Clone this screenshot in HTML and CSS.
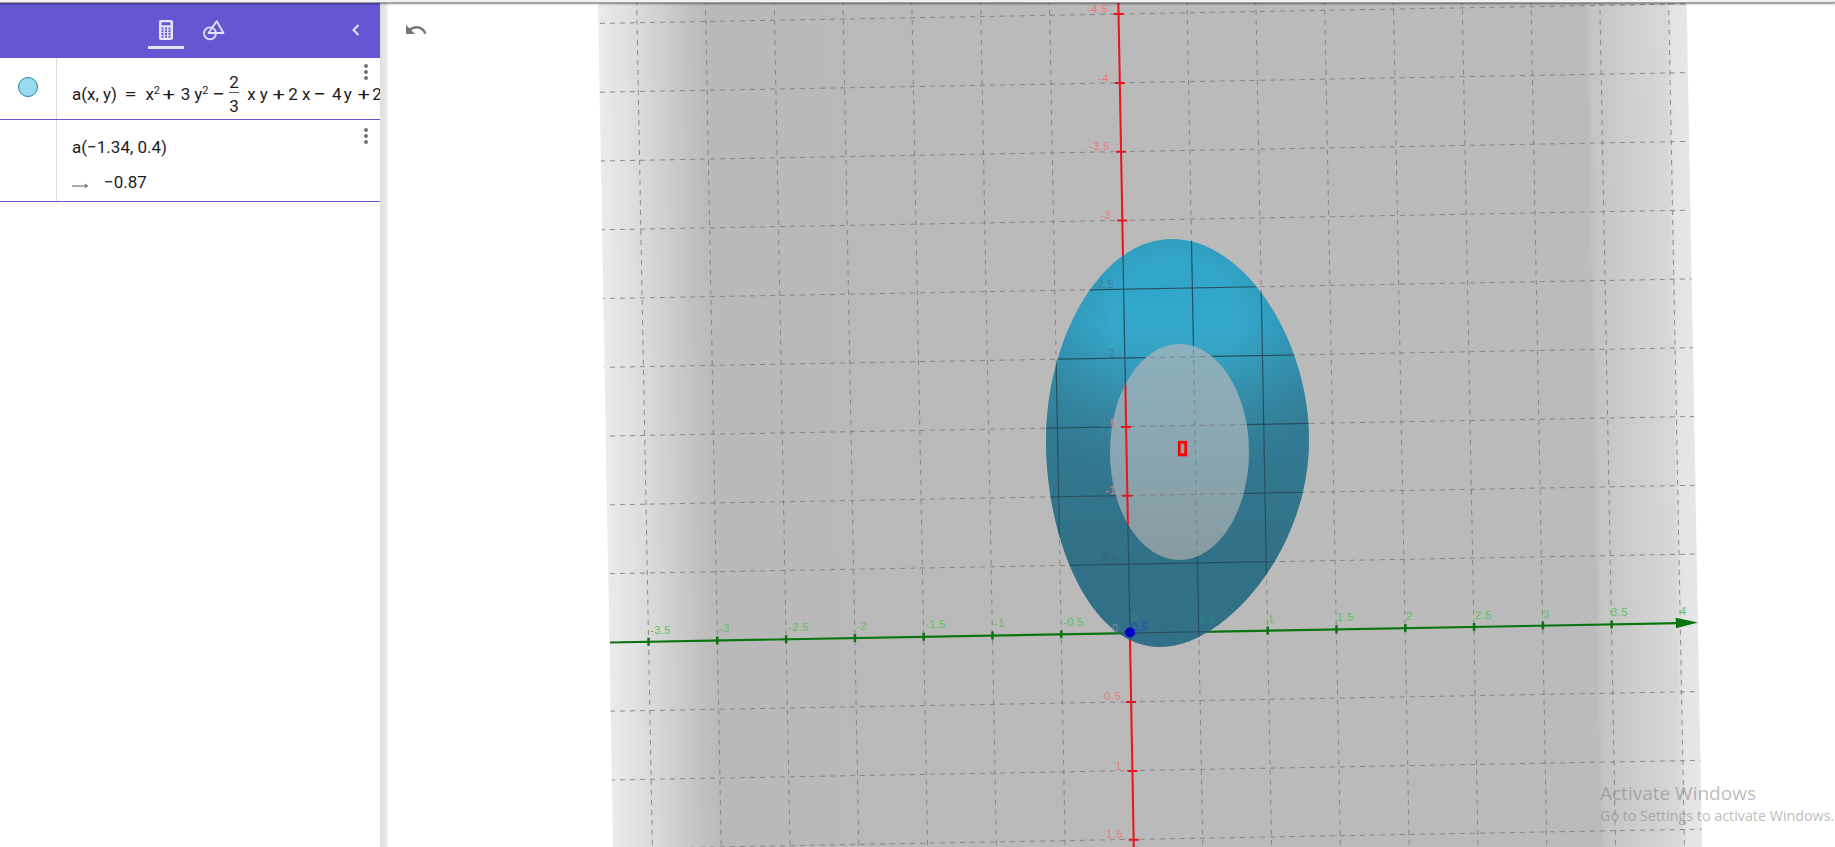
FILE: index.html
```html
<!DOCTYPE html>
<html lang="en">
<head>
<meta charset="utf-8">
<title>GeoGebra 3D Calculator</title>
<link rel="stylesheet" href="styles.css">
</head>
<body>
<div class="app">
  <div class="top-strip"></div>
  <div class="main">
    <aside class="algebra">
      <header class="header">
        <div class="tabs">
          <div class="tab tab-active">
            <svg class="tab-icon" viewBox="0 0 14 20"><path class="icon-fill" fill-rule="evenodd" d="M2 0h10a2 2 0 0 1 2 2v16a2 2 0 0 1-2 2H2a2 2 0 0 1-2-2V2a2 2 0 0 1 2-2zM2.500 2.300v3h9v-3zM2.500 7.400v2h2v-2zM6 7.400v2h2v-2zM9.500 7.400v2h2v-2zM2.500 10.200v2h2v-2zM6 10.200v2h2v-2zM9.500 10.200v2h2v-2zM2.500 13v2h2v-2zM6 13v2h2v-2zM9.500 13v2h2v-2zM2.500 15.800v2h2v-2zM6 15.800v2h2v-2zM9.500 15.800v2h2v-2z"/></svg>
          </div>
          <div class="tab">
            <svg class="tab-icon-geo" viewBox="0 0 22 22"><circle class="icon-line" cx="7" cy="14.300" r="6"/><path class="icon-line" d="M13.700 2.300 20.500 14H5.500Z"/></svg>
          </div>
        </div>
        <svg class="chevron" viewBox="0 0 12 16"><path class="chevron-line" d="M8.500 3 3.500 8l5 5"/></svg>
      </header>
      <div class="row row-one">
        <div class="marble-cell"><span class="marble"></span></div>
        <div class="cell">
          <div class="formula">
            <span>a(x, y)</span><span class="op ml9">=</span><span class="ml10">x<sup>2</sup></span><span class="op ml4">+</span><span class="ml7">3</span><span class="ml4">y<sup>2</sup></span><span class="op ml6">−</span>
            <span class="frac ml5"><span class="num">2</span><span class="bar"></span><span class="den">3</span></span>
            <span class="ml8">x</span><span class="ml4">y</span><span class="op ml6">+</span><span class="ml5">2</span><span class="ml4">x</span><span class="op ml5">−</span><span class="ml7">4</span><span class="ml2">y</span><span class="op ml7">+</span><span class="ml4">2</span>
          </div>
          <span class="dots"><i></i><i></i><i></i></span>
        </div>
      </div>
      <div class="row row-two">
        <div class="marble-cell"></div>
        <div class="cell">
          <div class="line-input">a(−1.34, 0.4)</div>
          <div class="line-output">
            <svg class="out-arrow" viewBox="0 0 16 6"><path class="out-arrow-line" d="M0 3h15M12.500 1.200 15.500 3l-3 1.800"/></svg>
            <span>−0.87</span>
          </div>
          <span class="dots"><i></i><i></i><i></i></span>
        </div>
      </div>
    </aside>
    <div class="splitter"></div>
    <section class="graphics">
      <svg class="undo" viewBox="0 0 24 24"><path class="undo-path" d="M12.500 8c-2.650 0-5.050.99-6.900 2.600L2 7v9h9l-3.620-3.620c1.390-1.160 3.160-1.880 5.120-1.880 3.540 0 6.550 2.310 7.600 5.500l2.370-.78C21.080 11.030 17.150 8 12.500 8z"/></svg>
      <svg class="scene" viewBox="388 3 1447 844">
        <defs>
          <linearGradient id="plane" gradientUnits="userSpaceOnUse" x1="598" y1="0" x2="1698" y2="-19">
            <stop offset="0" stop-color="#ebebeb"/>
            <stop offset="0.025" stop-color="#e0e0e0"/>
            <stop offset="0.056" stop-color="#d0d0d0"/>
            <stop offset="0.084" stop-color="#c0c0c0"/>
            <stop offset="0.102" stop-color="#b9b9b9"/>
            <stop offset="0.897" stop-color="#bbbbbb"/>
            <stop offset="0.902" stop-color="#c4c4c4"/>
            <stop offset="0.97" stop-color="#d8d8d8"/>
            <stop offset="0.976" stop-color="#e4e4e4"/>
            <stop offset="1" stop-color="#e8e8e8"/>
          </linearGradient>
          <linearGradient id="eggfill" gradientUnits="userSpaceOnUse" x1="1170" y1="239" x2="1165" y2="647">
            <stop offset="0" stop-color="#30a4c8"/>
            <stop offset="0.22" stop-color="#34a8cc"/>
            <stop offset="0.45" stop-color="#388ea9"/>
            <stop offset="0.7" stop-color="#367a91"/>
            <stop offset="1" stop-color="#35748a"/>
          </linearGradient>
          <radialGradient id="eggshade" gradientUnits="userSpaceOnUse" cx="1175" cy="320" r="170">
            <stop offset="0" stop-color="#2d6c82" stop-opacity="0"/>
            <stop offset="0.35" stop-color="#2d6c82" stop-opacity="0"/>
            <stop offset="1" stop-color="#2d6c82" stop-opacity=".55"/>
          </radialGradient>
          <linearGradient id="holefill" gradientUnits="userSpaceOnUse" x1="1175" y1="345" x2="1175" y2="560">
            <stop offset="0" stop-color="#8cb0bd"/>
            <stop offset="0.5" stop-color="#8aa6b0"/>
            <stop offset="1" stop-color="#869ba1"/>
          </linearGradient>
          <clipPath id="planeclip"><path d="M598 0H1686.600L1702 847H613Z"/></clipPath>
          <clipPath id="eggclip"><path d="M1172 239C1245 239 1309 340 1309 440C1309 550 1225 647 1160 647C1090 647 1046 540 1046 440C1046 340 1100 239 1172 239Z"/></clipPath>
          <clipPath id="holeclip"><ellipse cx="1179.500" cy="452" rx="69.500" ry="108"/></clipPath>
          <g id="vlines">
            <path d="M636.600 0 652.400 847M705.400 0 721.200 847M774.200 0 790 847M843 0 858.800 847M911.800 0 927.600 847M980.600 0 996.400 847M1049.400 0 1065.200 847M1118.200 0 1134 847M1187 0 1202.800 847M1255.800 0 1271.600 847M1324.600 0 1340.400 847M1393.400 0 1409.200 847M1462.200 0 1478 847M1531 0 1546.800 847M1599.800 0 1615.600 847M1668.600 0 1684.400 847"/>
          </g>
          <g id="hlines">
            <path d="M590 23.600 1710 3.400M590 92.400 1710 72.200M590 161.200 1710 141M590 230 1710 209.800M590 298.800 1710 278.600M590 367.600 1710 347.400M590 436.400 1710 416.200M590 505.200 1710 485M590 574 1710 553.800M590 642.800 1710 622.600M590 711.600 1710 691.400M590 780.400 1710 760.200M590 849.200 1710 829"/>
          </g>
          <g id="redaxis">
            <path class="red-line" d="M1118.300 0 1133.800 847"/>
            <path class="red-tick" d="M1113.600 14h10M1114.800 83h10M1116.100 151.700h10M1117.300 220.500h10M1118.600 289.300h10M1119.900 358h10M1121.100 427h10M1122.400 495.700h10M1123.600 564.500h10M1126.100 702h10M1127.400 771h10M1128.700 839.700h10"/>
          </g>
        </defs>

        <path class="plane" d="M598 0H1686.600L1702 847H613Z"/>
        <g clip-path="url(#planeclip)">
          <use href="#vlines" class="grid-dash"/>
          <use href="#hlines" class="grid-dash"/>
        </g>

        <text class="lbl-green" x="650" y="634">-3.5</text>
        <text class="lbl-green" x="719" y="632">-3</text>
        <text class="lbl-green" x="788" y="631">-2.5</text>
        <text class="lbl-green" x="856" y="630">-2</text>
        <text class="lbl-green" x="925" y="628">-1.5</text>
        <text class="lbl-green" x="994" y="627">-1</text>
        <text class="lbl-green" x="1063" y="626">-0.5</text>
        <text class="lbl-green" x="1268" y="623">1</text>
        <text class="lbl-green" x="1337" y="621">1.5</text>
        <text class="lbl-green" x="1406" y="620">2</text>
        <text class="lbl-green" x="1475" y="619">2.5</text>
        <text class="lbl-green" x="1543" y="618">3</text>
        <text class="lbl-green" x="1611" y="616">3.5</text>
        <text class="lbl-green" x="1680" y="615">4</text>

        <text class="lbl-red lbl-end" x="1108" y="13">-4.5</text>
        <text class="lbl-red lbl-end" x="1109" y="82">-4</text>
        <text class="lbl-red lbl-end" x="1110" y="150">-3.5</text>
        <text class="lbl-red lbl-end" x="1111" y="219">-3</text>
        <text class="lbl-red lbl-end" x="1121" y="700">0.5</text>
        <text class="lbl-red lbl-end" x="1122" y="770">1</text>
        <text class="lbl-red lbl-end" x="1123" y="838">1.5</text>

        <use href="#redaxis"/>
        <path class="green-line" d="M610 642.500 1680 623.200"/>
        <path class="green-tick" d="M648.500 637.700v8M717.300 636.500v8M786.100 635.200v8M854.900 634v8M923.700 632.800v8M992.500 631.500v8M1061.300 630.300v8M1130.100 629v8M1198.900 627.800v8M1267.700 626.600v8M1336.500 625.300v8M1405.300 624.100v8M1474.100 622.900v8M1542.900 621.600v8M1611.700 620.400v8"/>
        <path class="green-head" d="M1675.700 617.700 1698 622.600 1676 628.300Z"/>

        <path class="egg" d="M1172 239C1245 239 1309 340 1309 440C1309 550 1225 647 1160 647C1090 647 1046 540 1046 440C1046 340 1100 239 1172 239Z"/>
        <path class="egg-shade" d="M1172 239C1245 239 1309 340 1309 440C1309 550 1225 647 1160 647C1090 647 1046 540 1046 440C1046 340 1100 239 1172 239Z"/>
        <g clip-path="url(#eggclip)">
          <use href="#vlines" class="grid-solid"/>
          <use href="#hlines" class="grid-solid"/>
        </g>
        <text class="lbl-dim" x="1093" y="288">-2.5</text>
        <text class="lbl-dim" x="1104" y="357">-2</text>
        <text class="lbl-dim" x="1096" y="427">-1.</text>
        <text class="lbl-dim-dark" x="1098" y="563">-0.5</text>
        <text class="lbl-teal" x="1199" y="624">0.5</text>
        <text class="lbl-teal" x="1131" y="621">0</text>

        <ellipse class="hole" cx="1179.500" cy="452" rx="69.500" ry="108"/>
        <g clip-path="url(#holeclip)">
          <use href="#vlines" class="grid-dash"/>
          <use href="#hlines" class="grid-dash"/>
          <use href="#redaxis"/>
        </g>
        <text class="lbl-red" x="1110" y="427">5</text>
        <text class="lbl-red lbl-end" x="1116" y="494">-1</text>

        <text class="lbl-blue" x="1131" y="631">0.5</text>
        <text class="lbl-grey" x="1112" y="632">0</text>
        <circle class="point" cx="1130" cy="632.500" r="5"/>
        <rect class="marker" x="1179.300" y="442.300" width="6.400" height="12.600"/>
      </svg>
    </section>
  </div>
</div>
<div class="watermark">
  <div class="wm-title">Activate Windows</div>
  <div class="wm-sub">Go to Settings to activate Windows.</div>
</div>
</body>
</html>
```
FILE: styles.css
```css
* { box-sizing: border-box; }
html, body { margin: 0; padding: 0; height: 847px; overflow: hidden; background: #fff; }
body { font-family: Roboto, "Liberation Sans", sans-serif; color: #1c1c1f; position: relative; }
.app { display: flex; flex-direction: column; width: 1835px; height: 847px; }
.top-strip { height: 3px; flex: none; background: linear-gradient(#f4f4f4 0, #f0f0f0 50%, #777 100%); position: relative; z-index: 2; box-shadow: 0 1px 2px rgba(0,0,0,.45); }
.main { display: flex; flex: 1; min-height: 0; }

.algebra { width: 380px; flex: none; display: flex; flex-direction: column; background: #fff; }
.header { height: 55px; flex: none; background: #6557d2; position: relative; display: flex; justify-content: center; }
.tabs { display: flex; gap: 12px; }
.tab { width: 36px; height: 46px; display: flex; align-items: center; justify-content: center; padding-top: 11px; border-bottom: 3px solid transparent; }
.tab-active { border-bottom-color: #e6e3f8; }
.tab-icon { width: 14px; height: 20px; display: block; }
.tab-icon-geo { width: 22px; height: 22px; display: block; }
.icon-fill { fill: #e6e3f8; }
.icon-line { fill: none; stroke: #e6e3f8; stroke-width: 1.800; stroke-linejoin: round; }
.chevron { position: absolute; left: 350px; top: 19px; width: 12px; height: 16px; }
.chevron-line { fill: none; stroke: #e6e3f8; stroke-width: 2; }

.row { display: flex; border-bottom: 1px solid #6557d2; flex: none; }
.row-one { height: 62px; }
.row-two { height: 82px; }
.marble-cell { width: 57px; flex: none; border-right: 1px solid #dcdcdc; display: flex; justify-content: center; }
.marble { width: 20px; height: 20px; margin-top: 19px; margin-right: 1px; border-radius: 50%; background: #99dcf0; border: 1px solid #1f86a8; }
.cell { flex: 1; min-width: 0; position: relative; overflow: hidden; padding-left: 15px; font-size: 17px; line-height: 24px; }
.formula { display: flex; align-items: flex-start; white-space: nowrap; padding-top: 24px; }
.formula sup { font-size: 11px; line-height: 0; vertical-align: 6px; }
.op { display: inline-block; transform: scaleX(1.3); }
.ml2 { margin-left: 2px; }
.ml4 { margin-left: 4px; }
.ml5 { margin-left: 5px; }
.ml6 { margin-left: 6px; }
.ml7 { margin-left: 7px; }
.ml8 { margin-left: 8px; }
.ml9 { margin-left: 9px; }
.ml10 { margin-left: 10px; }
.frac { display: block; flex: none; width: 10px; height: 24px; position: relative; }
.num { position: absolute; top: -12px; left: 0; }
.den { position: absolute; top: 12px; left: 0; }
.bar { position: absolute; left: 0; right: 0; top: 10px; height: 1px; background: #555; }
.dots { position: absolute; right: 12px; top: 6px; display: flex; flex-direction: column; gap: 2px; }
.dots i { width: 4px; height: 4px; border-radius: 50%; background: #757575; display: block; }
.row-two .dots { top: 8px; }
.line-input { padding-top: 15px; }
.line-output { margin-top: 11px; display: flex; align-items: center; gap: 16px; }
.out-arrow { width: 16px; height: 6px; flex: none; margin-top: 8px; }
.out-arrow-line { fill: none; stroke: #555; stroke-width: 1; }

.splitter { width: 8px; flex: none; background: linear-gradient(90deg, #dedede, #eaeaea 80%, #f8f8f8); }
.graphics { flex: 1; position: relative; min-width: 0; }
.scene { display: block; width: 1447px; height: 844px; }
.undo { position: absolute; left: 16px; top: 15px; width: 24px; height: 24px; z-index: 1; }
.undo-path { fill: #757575; }

.plane { fill: url(#plane); }
.grid-dash { fill: none; stroke: #7e7e7e; stroke-width: 1; stroke-dasharray: 5 5; opacity: .85; }
.grid-solid { fill: none; stroke: #26505f; stroke-width: 1.200; }
.red-line { fill: none; stroke: #e9141e; stroke-width: 2; }
.red-tick { fill: none; stroke: #e9141e; stroke-width: 2; }
.green-line { fill: none; stroke: #0a7510; stroke-width: 2.200; }
.green-tick { fill: none; stroke: #0a7510; stroke-width: 2.500; }
.green-head { fill: #0a7510; }
.egg { fill: url(#eggfill); }
.egg-shade { fill: url(#eggshade); }
.hole { fill: url(#holefill); }
.point { fill: #0000c8; }
.marker { fill: none; stroke: #f00; stroke-width: 2.800; }

.lbl-green, .lbl-red, .lbl-dim, .lbl-dim-dark, .lbl-teal, .lbl-blue, .lbl-grey { font-family: "Liberation Sans", sans-serif; font-size: 11px; letter-spacing: .5px; }
.lbl-end { text-anchor: end; }
.lbl-green { fill: #5cc45c; }
.lbl-red { fill: #f57878; }
.lbl-dim { fill: #3d7f98; }
.lbl-dim-dark { fill: #3f5e6e; }
.lbl-teal { fill: #2a8a80; }
.lbl-blue { fill: #1a4fc0; }
.lbl-grey { fill: #8a8a8a; }

.watermark { position: absolute; left: 1600px; top: 779px; font-family: "Open Sans", "Noto Sans", sans-serif; color: rgba(130,130,130,.55); white-space: nowrap; z-index: 3; }
.wm-title { font-size: 19px; line-height: 28px; }
.wm-sub { font-size: 14.300px; line-height: 20px; margin-top: -1px; }
```
